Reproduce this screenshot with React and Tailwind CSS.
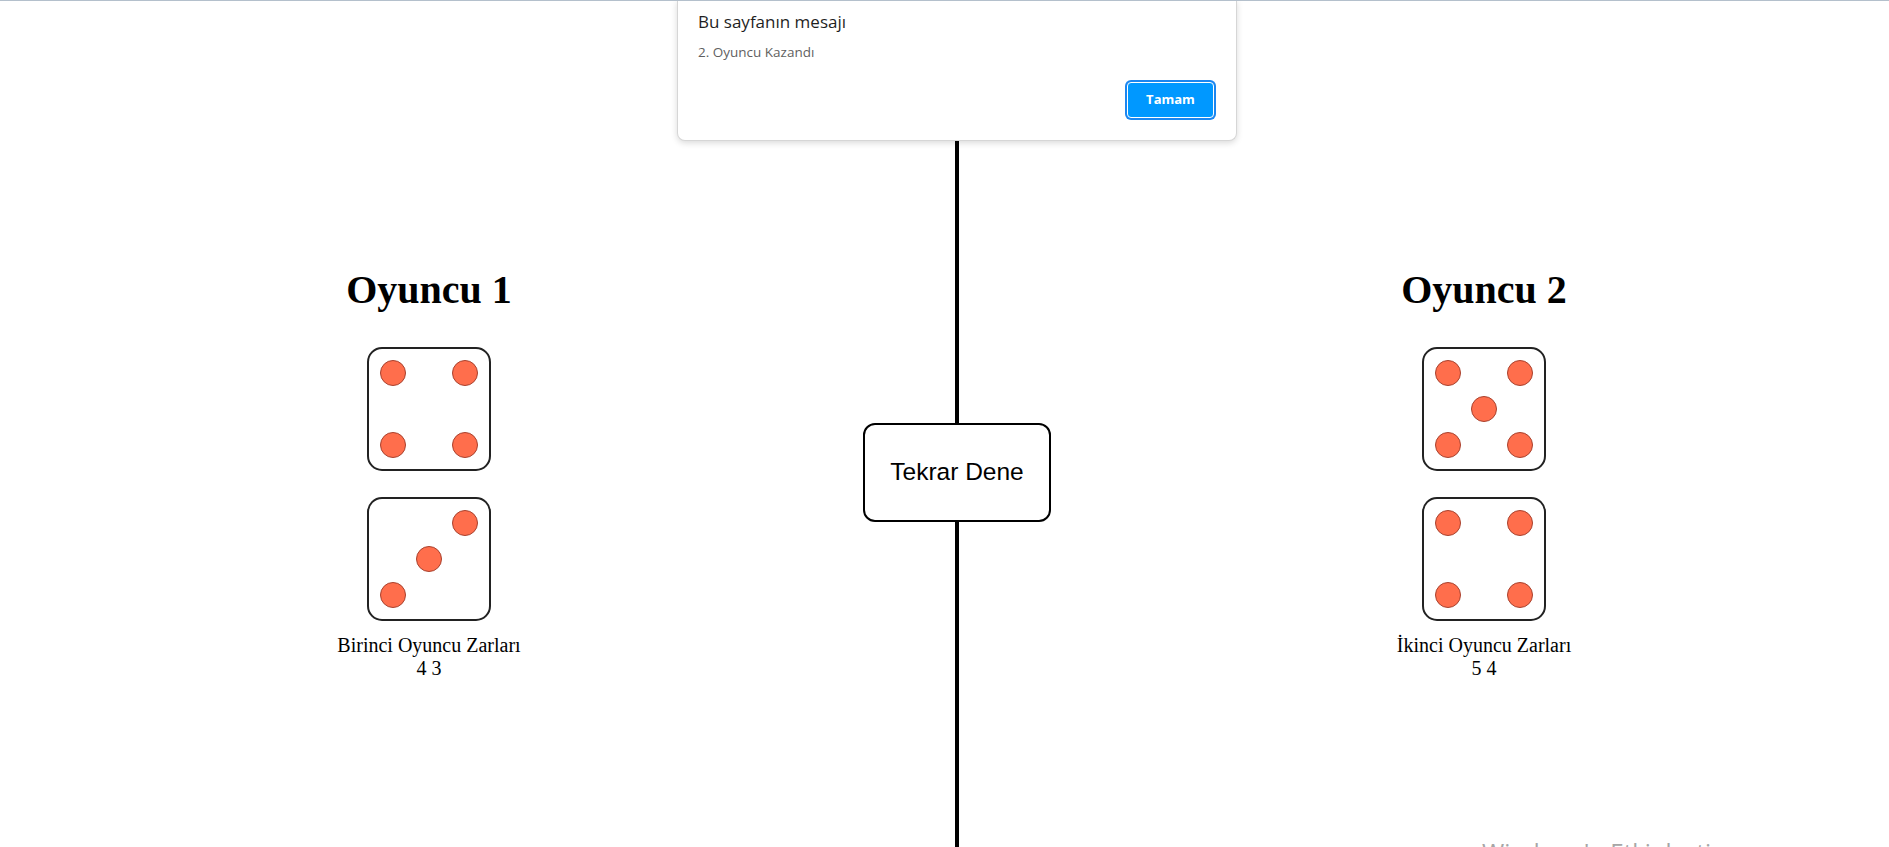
const faces = {
  3: [2, 4, 6],
  4: [0, 2, 6, 8],
  5: [0, 2, 4, 6, 8],
};

function Die({ value }) {
  const dots = faces[value];
  return (
    <div className="grid h-[124px] w-[124px] grid-cols-[26px_26px_26px] grid-rows-[26px_26px_26px] gap-[10px] rounded-[15px] border-2 border-[#222] bg-white p-[11px]">
      {Array.from({ length: 9 }).map((_, i) => (
        <div key={i} className="flex items-center justify-center">
          {dots.includes(i) && (
            <span className="block h-[26px] w-[26px] rounded-full border-[1.5px] border-[#a8412d] bg-[#ff6e4c]" />
          )}
        </div>
      ))}
    </div>
  );
}

function Player({ title, dice, caption }) {
  return (
    <div className="flex flex-col items-center pt-[266px] font-['Liberation_Serif',serif] text-black">
      <h1 className="text-[40px] font-bold leading-[46px]">{title}</h1>
      <div className="mt-[34px] flex flex-col gap-[26px]">
        {dice.map((d, i) => (
          <Die key={i} value={d} />
        ))}
      </div>
      <div className="mt-[13px] text-center text-[20px] leading-[23px]">
        <div>{caption}</div>
        <div>{dice.join(" ")}</div>
      </div>
    </div>
  );
}

export default function App() {
  return (
    <div className="relative h-[847px] w-full overflow-hidden border-t border-[#b4c0cc] bg-white">
      <div className="grid h-full grid-cols-[858px_198px_856px]">
        <Player title="Oyuncu 1" dice={[4, 3]} caption="Birinci Oyuncu Zarları" />
        <div className="flex flex-col items-center">
          <div className="h-[422px] w-[4px] bg-black" />
          <button className="flex h-[99px] w-[188px] items-center justify-center rounded-[12px] border-2 border-black bg-white font-['Liberation_Sans',Arial,sans-serif] text-[24.5px] text-black">
            Tekrar Dene
          </button>
          <div className="w-[4px] flex-1 bg-black" />
        </div>
        <Player title="Oyuncu 2" dice={[5, 4]} caption="İkinci Oyuncu Zarları" />
      </div>

      <div className="absolute left-[677px] top-[-1px] flex h-[141px] w-[560px] flex-col rounded-b-[8px] border border-t-0 border-[#d6d6d6] bg-white px-[20px] pb-[20px] pt-[10px] font-['Open_Sans',sans-serif] shadow-[0_2px_6px_rgba(0,0,0,0.15)]">
        <div className="text-[17px] font-medium leading-[24px] text-[#1f1f1f]">Bu sayfanın mesajı</div>
        <div className="mt-[9px] text-[13.5px] leading-[18px] text-[#5f5f5f]">2. Oyuncu Kazandı</div>
        <div className="mt-auto flex justify-end">
          <div className="rounded-[6px] bg-[#1b86f0] p-[2px]">
            <div className="flex h-[36px] w-[87px] items-center justify-center rounded-[4px] border border-white bg-[#0098ff] text-[13px] font-bold text-white">
              Tamam
            </div>
          </div>
        </div>
      </div>

      <div className="pointer-events-none absolute left-[1482px] top-[839px] whitespace-nowrap font-['Open_Sans',sans-serif] text-[24px] leading-[24px] text-[#a6a6a6]">
        Windows'u Etkinleştir
      </div>
    </div>
  );
}
